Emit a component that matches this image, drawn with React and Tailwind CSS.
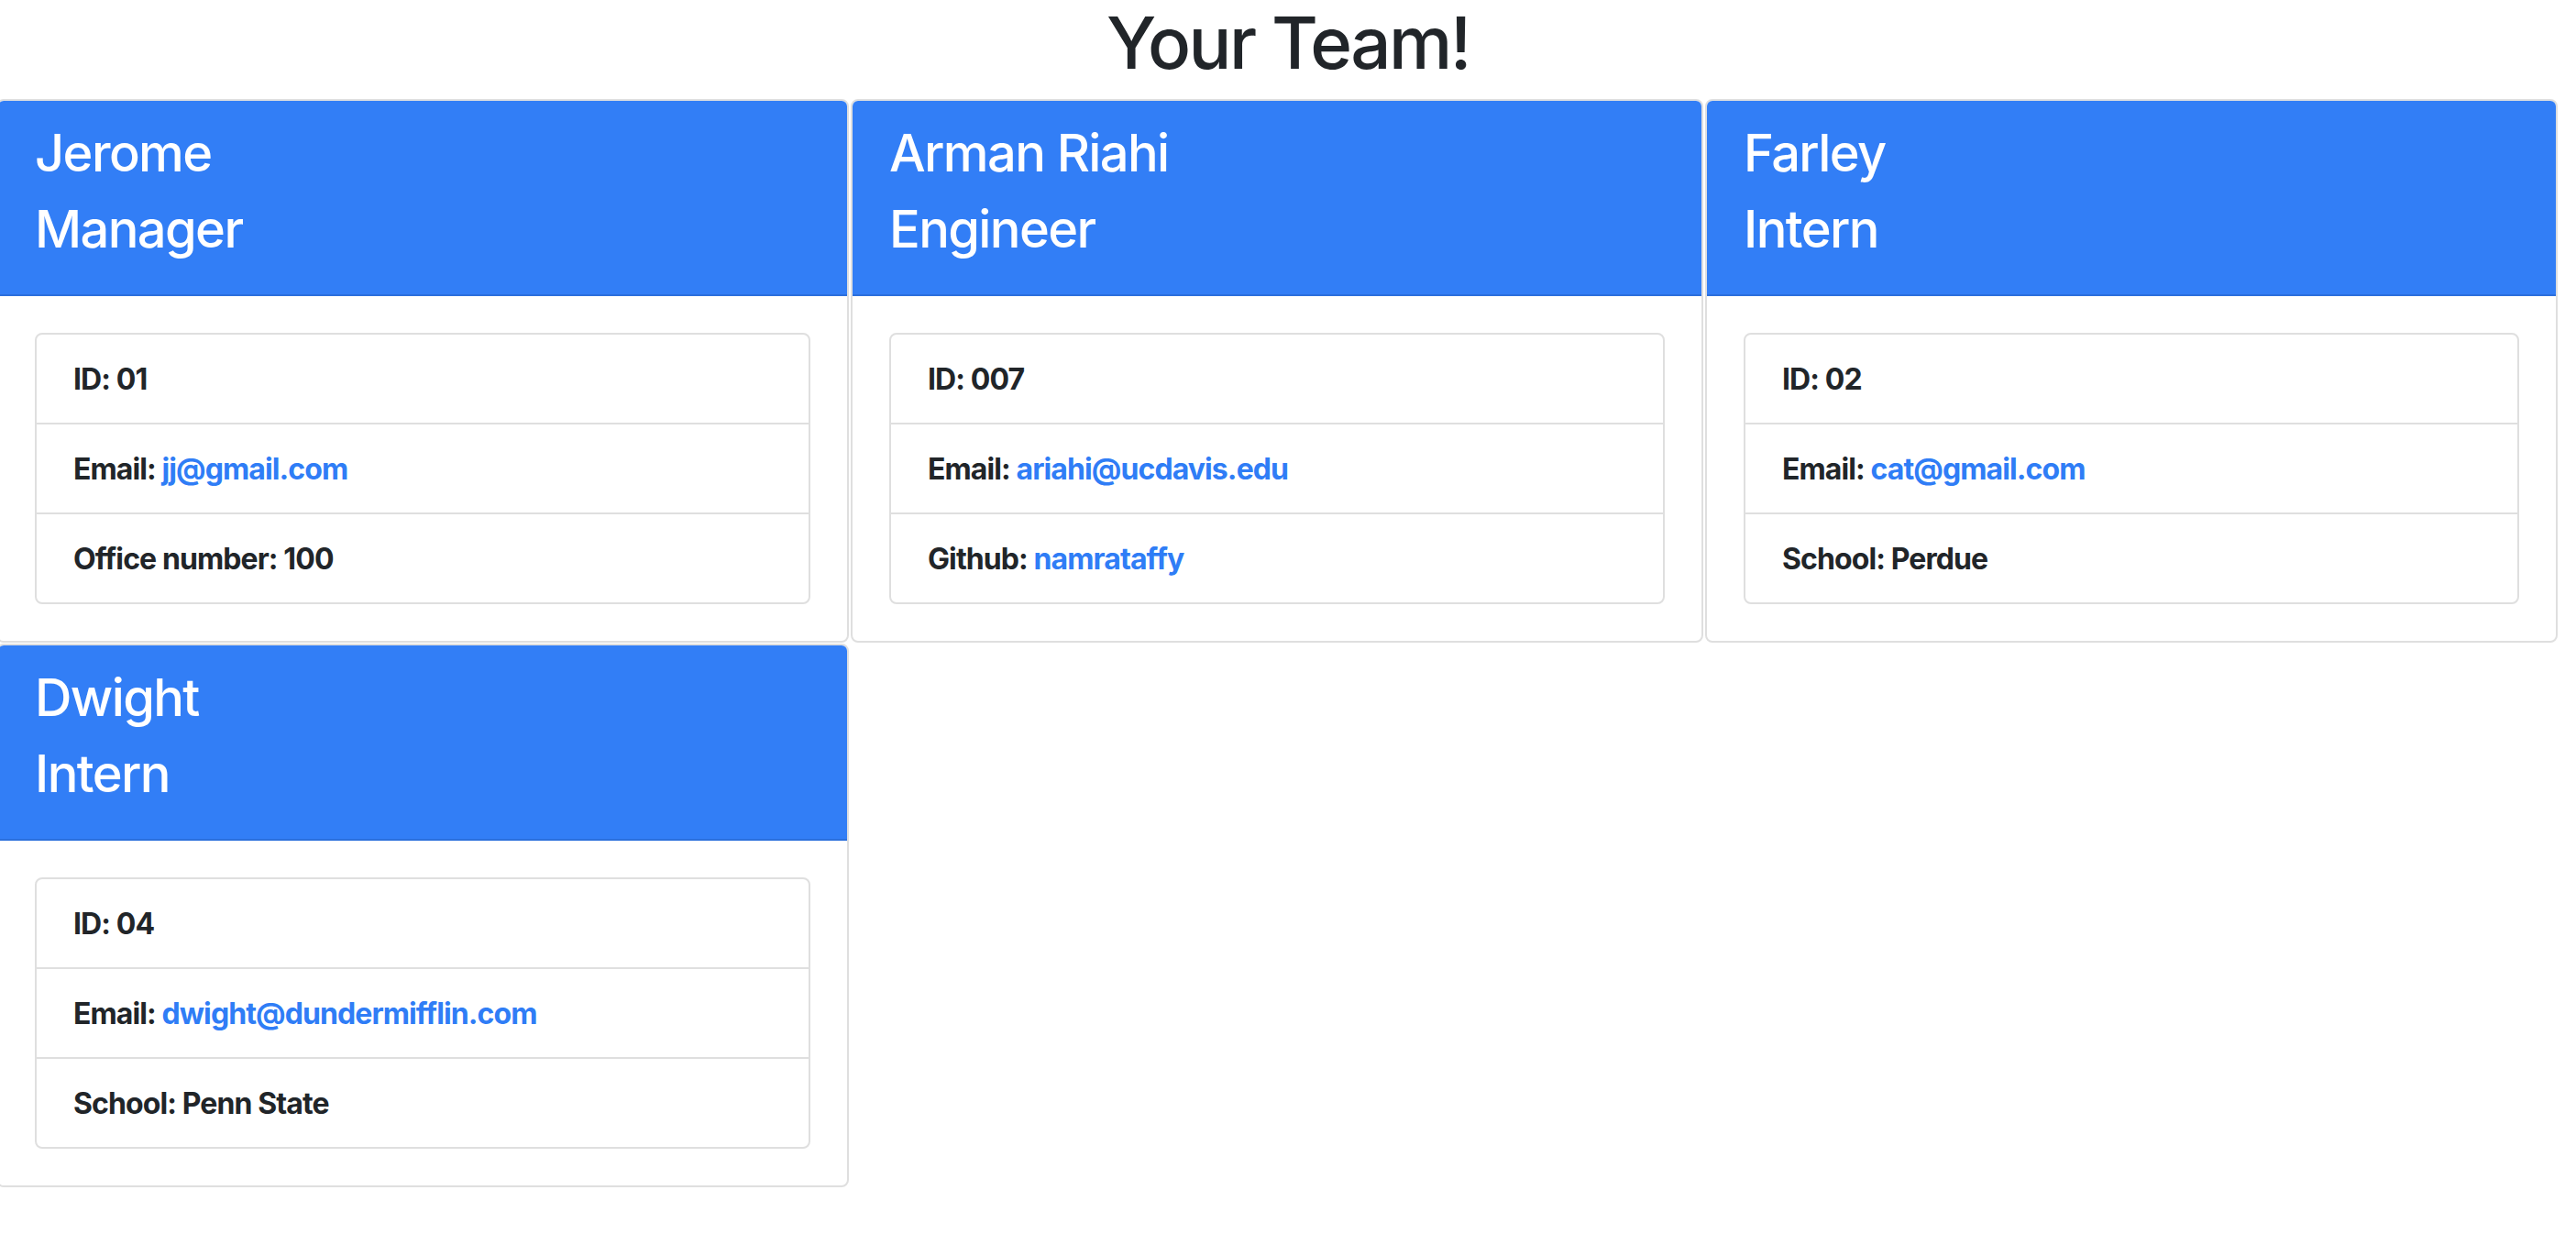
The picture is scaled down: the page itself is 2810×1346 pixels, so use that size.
import React from 'react';

const team = [
  {
    name: 'Jerome',
    role: 'Manager',
    id: '01',
    email: 'jj@gmail.com',
    extra: { label: 'Office number', value: '100' },
  },
  {
    name: 'Arman Riahi',
    role: 'Engineer',
    id: '007',
    email: 'ariahi@ucdavis.edu',
    extra: { label: 'Github', value: 'namrataffy', link: true },
  },
  {
    name: 'Farley',
    role: 'Intern',
    id: '02',
    email: 'cat@gmail.com',
    extra: { label: 'School', value: 'Perdue' },
  },
  {
    name: 'Dwight',
    role: 'Intern',
    id: '04',
    email: 'dwight@dundermifflin.com',
    extra: { label: 'School', value: 'Penn State' },
  },
];

const MemberCard = ({ member }) => {
  return (
    <div className="rounded-[8px] border-2 border-[#dfdfdf] bg-white overflow-hidden">
      {/* Header */}
      <div className="bg-[#327ef6] text-white px-[40px] pt-[24px] pb-[37px] border-b-2 border-[#2b6fdc]">
        <h3 className="text-[56px] leading-[67px] font-medium mb-[16px] tracking-[-1.6px]">{member.name}</h3>
        <h3 className="text-[56px] leading-[67px] font-medium tracking-[-1.6px]">{member.role}</h3>
      </div>

      {/* Body */}
      <div className="p-[40px]">
        <ul className="rounded-[8px] border-2 border-[#dfdfdf] divide-y-2 divide-[#dfdfdf] text-[32px] leading-[48px] font-bold text-[#212529] tracking-[-0.9px]">
          <li className="px-[40px] pt-[25px] pb-[23px]">ID: {member.id}</li>
          <li className="px-[40px] pt-[25px] pb-[23px]">
            Email: <a className="text-[#2f7df6]">{member.email}</a>
          </li>
          <li className="px-[40px] pt-[25px] pb-[23px]">
            {member.extra.label}:{' '}
            {member.extra.link ? (
              <a className="text-[#2f7df6]">{member.extra.value}</a>
            ) : (
              member.extra.value
            )}
          </li>
        </ul>
      </div>
    </div>
  );
};

const App = () => {
  return (
    <div
      className="min-h-[1346px] w-[2810px] bg-white overflow-hidden"
      style={{ fontFamily: 'Inter, "Liberation Sans", sans-serif' }}
    >
      <h1 className="text-center text-[78px] leading-[94px] font-medium text-[#212529] mb-[14px] tracking-[-2.5px]">
        Your Team!
      </h1>

      {/* Cards */}
      <div className="grid grid-cols-3 gap-x-[2px] gap-y-[1px] w-[2794px] -ml-[4px]">
        {team.map(member => (
          <MemberCard key={member.id} member={member} />
        ))}
      </div>
    </div>
  );
};

export default App;
